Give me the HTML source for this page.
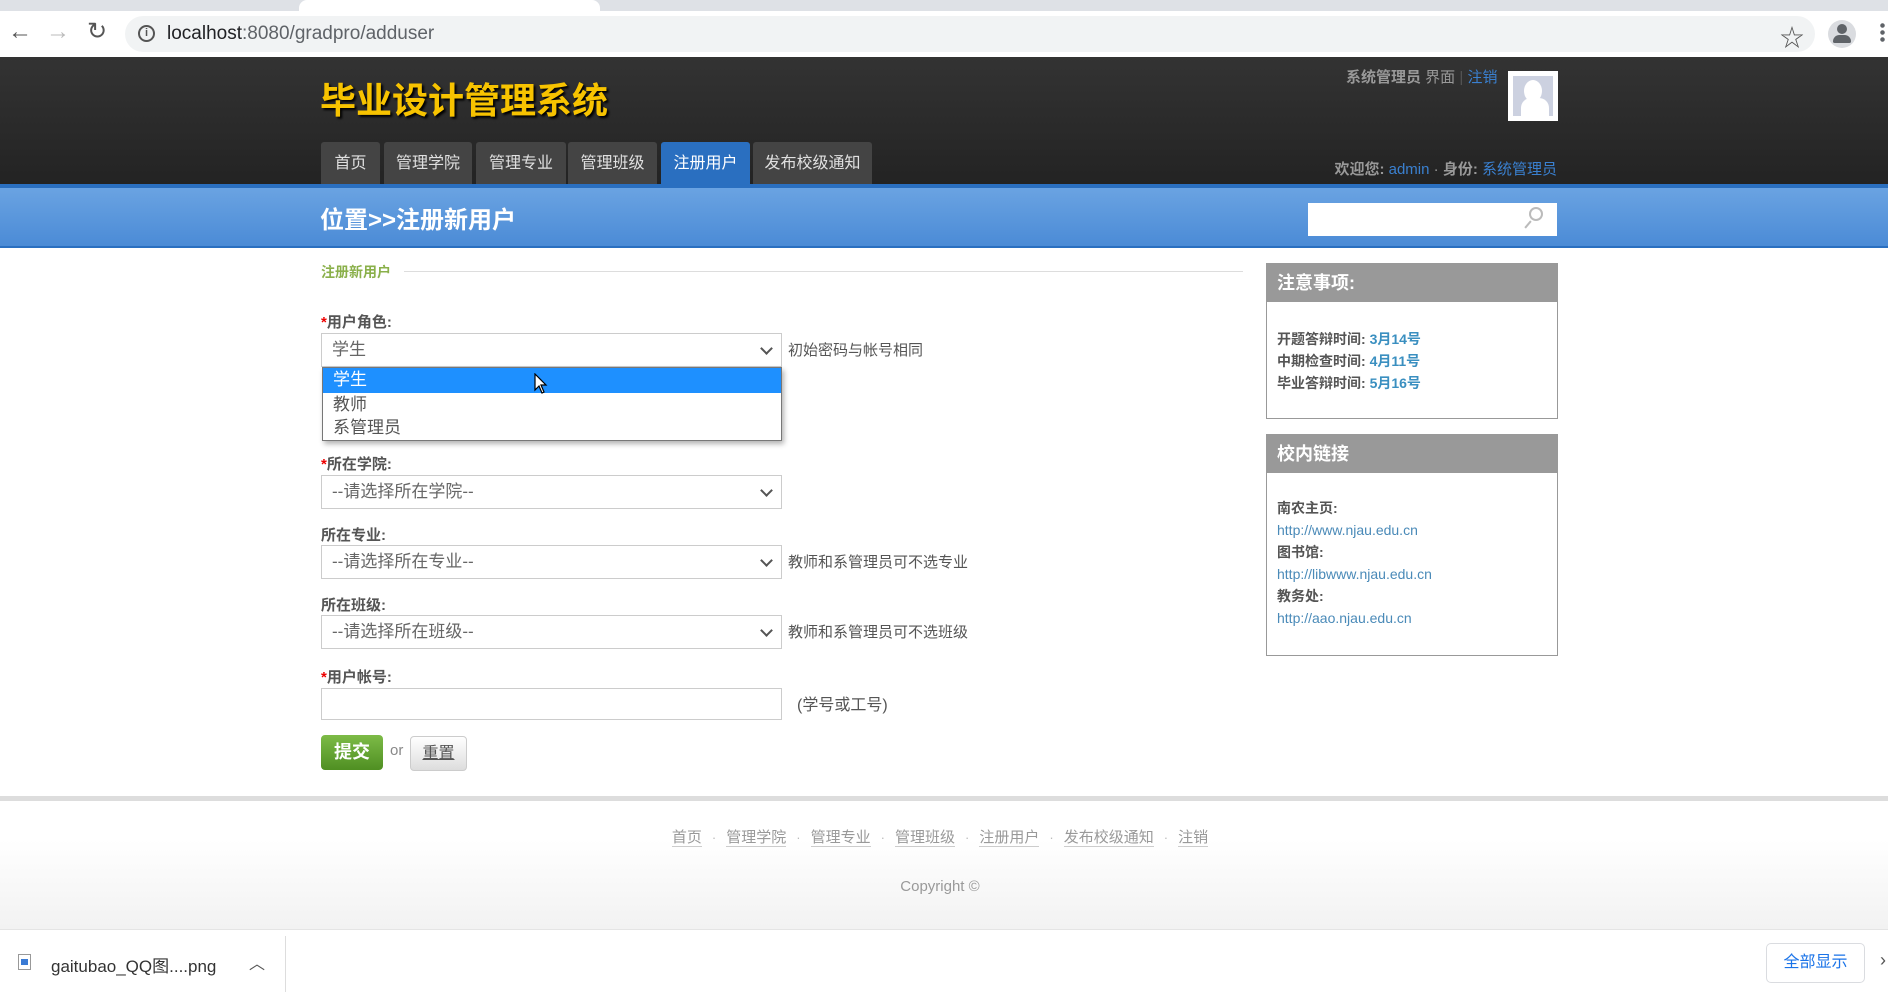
<!DOCTYPE html>
<html><head><meta charset="utf-8"><style>
*{margin:0;padding:0;box-sizing:border-box}
body{width:1888px;height:996px;overflow:hidden;position:relative;font-family:"Liberation Sans","Noto Sans CJK SC",sans-serif;background:#fff;color:#555}
.a{position:absolute;white-space:nowrap}
.tab{position:absolute;top:142px;height:42px;background:#444;color:#e0e0e0;font-size:16px;line-height:44px;text-align:center;border-radius:3px 3px 0 0}
.sel{position:absolute;left:321px;width:461px;height:34px;border:1px solid #ccc;background:#fff;font-size:17px;color:#666;line-height:32px;padding-left:10px}
.sel:after{content:"";position:absolute;right:10px;top:10px;width:7px;height:7px;border-right:2px solid #555;border-bottom:2px solid #555;transform:rotate(45deg)}
.lbl{position:absolute;left:321px;font-size:15px;font-weight:bold;color:#555}
.lbl b{color:#e00}
.hint{position:absolute;font-size:15px;color:#555}
.box{position:absolute;left:1266px;width:292px;border:1px solid #999}
.box h3{background:#999;color:#fff;font-size:18px;height:38px;line-height:38px;padding-left:10px}
.box p{font-size:14px;font-weight:bold;color:#555;padding-left:10px;line-height:22px}
.box p span{color:#3a8fc0}
.box a{display:block;font-size:14px;color:#4a8ab8;padding-left:10px;line-height:22px}
.fl{color:#999;text-decoration:none;border-bottom:1px solid #ccc;font-size:15px}
.dot{color:#bbb;margin:0 10px;font-size:13px}
</style></head><body>
<div class="a" style="left:0;top:0;width:1888px;height:11px;background:#dee1e6"></div>
<div class="a" style="left:299px;top:0;width:301px;height:11px;background:#fff;border-radius:8px 8px 0 0"></div>
<div class="a" style="left:0;top:11px;width:1888px;height:46px;background:#fff"></div>
<div class="a" style="left:8px;top:18px;font-size:24px;color:#555">←</div>
<div class="a" style="left:46px;top:18px;font-size:24px;color:#bbb">→</div>
<div class="a" style="left:87px;top:17px;font-size:24px;color:#555">↻</div>
<div class="a" style="left:125px;top:16px;width:1690px;height:36px;background:#f1f3f4;border-radius:18px"></div>
<div class="a" style="left:138px;top:25px;width:17px;height:17px;border:2px solid #555;border-radius:50%;font-size:11px;line-height:13px;text-align:center;color:#555;font-weight:bold">i</div>
<div class="a" style="left:167px;top:23px;font-size:19px;color:#202124">localhost<span style="color:#5f6368">:8080/gradpro/adduser</span></div>
<div class="a" style="left:1780px;top:18px;font-size:24px;color:#555">☆</div>
<div class="a" style="left:1828px;top:20px;width:28px;height:28px;border-radius:50%;background:#dadce0"></div>
<div class="a" style="left:1837px;top:24px;width:10px;height:10px;border-radius:50%;background:#5f6368"></div>
<div class="a" style="left:1833px;top:35px;width:18px;height:8px;border-radius:8px 8px 2px 2px;background:#5f6368"></div>
<div class="a" style="left:1880px;top:22px;width:5px;height:20px;background:radial-gradient(circle,#5f6368 2px,transparent 2.5px) 0 0/5px 7px"></div>
<div class="a" style="left:0;top:57px;width:1888px;height:127px;background:linear-gradient(#333,#232323)"></div>
<div class="a" style="left:320px;top:72px;font-size:36px;font-weight:bold;color:#f7c300;text-shadow:2px 2px 2px #000">毕业设计管理系统</div>
<div class="tab" style="left:321px;width:59px">首页</div>
<div class="tab" style="left:384px;width:88px">管理学院</div>
<div class="tab" style="left:476px;width:90px">管理专业</div>
<div class="tab" style="left:568px;width:89px">管理班级</div>
<div class="tab" style="left:661px;width:89px;background:#2a6fc0;color:#fff">注册用户</div>
<div class="tab" style="left:753px;width:119px">发布校级通知</div>
<div class="a" style="left:1346px;top:66px;font-size:15px;color:#999"><b>系统管理员</b> 界面 <span style="color:#555">|</span> <span style="color:#3a80d0">注销</span></div>
<div class="a" style="left:1508px;top:71px;width:50px;height:50px;background:#fff;padding:5px"><div style="width:40px;height:40px;background:#ccd1e0;position:relative;overflow:hidden"><div style="position:absolute;left:11px;top:4px;width:18px;height:22px;border-radius:50%;background:#fff"></div><div style="position:absolute;left:8px;top:22px;width:28px;height:24px;border-radius:10px 10px 0 0;background:#fff"></div></div></div>
<div class="a" style="right:331px;top:158px;font-size:15px;color:#999"><b>欢迎您:</b> <span style="color:#3a80d0">admin</span> · <b>身份:</b> <span style="color:#3a80d0">系统管理员</span></div>
<div class="a" style="left:0;top:184px;width:1888px;height:64px;background:linear-gradient(#6aa3e2,#4b8bd6);border-top:4px solid #2a6fc0;border-bottom:2px solid #2a6fc0"></div>
<div class="a" style="left:320px;top:200px;font-size:24px;font-weight:bold;color:#fff">位置&gt;&gt;注册新用户</div>
<div class="a" style="left:1308px;top:203px;width:249px;height:33px;background:#fff"></div>
<div class="a" style="left:1529px;top:207px;width:14px;height:14px;border:2px solid #bbb;border-radius:50%"></div>
<div class="a" style="left:1527px;top:220px;width:2px;height:9px;background:#bbb;transform:rotate(40deg)"></div>
<div class="a" style="left:321px;top:262px;font-size:14px;font-weight:bold;color:#8ab04a">注册新用户</div>
<div class="a" style="left:404px;top:271px;width:839px;height:1px;background:#ddd"></div>
<div class="lbl" style="top:311px"><b>*</b>用户角色:</div>
<div class="sel" style="top:333px">学生</div>
<div class="hint" style="left:788px;top:339px">初始密码与帐号相同</div>
<div class="lbl" style="top:453px"><b>*</b>所在学院:</div>
<div class="sel" style="top:475px">--请选择所在学院--</div>
<div class="lbl" style="top:524px">所在专业:</div>
<div class="sel" style="top:545px">--请选择所在专业--</div>
<div class="hint" style="left:788px;top:551px">教师和系管理员可不选专业</div>
<div class="lbl" style="top:594px">所在班级:</div>
<div class="sel" style="top:615px">--请选择所在班级--</div>
<div class="hint" style="left:788px;top:621px">教师和系管理员可不选班级</div>
<div class="lbl" style="top:666px"><b>*</b>用户帐号:</div>
<div class="a" style="left:321px;top:688px;width:461px;height:32px;border:1px solid #ccc"></div>
<div class="hint" style="left:797px;top:691px;font-size:16px">(学号或工号)</div>
<div class="a" style="left:321px;top:735px;width:62px;height:35px;border-radius:4px;background:linear-gradient(#7dbb47,#4f8f22);color:#fff;font-size:18px;font-weight:bold;line-height:35px;text-align:center">提交</div>
<div class="a" style="left:390px;top:742px;font-size:15px;color:#888">or</div>
<div class="a" style="left:410px;top:736px;width:57px;height:35px;border-radius:4px;border:1px solid #ccc;background:linear-gradient(#fff,#ddd);color:#555;font-size:16px;line-height:33px;text-align:center"><u>重置</u></div>
<div class="a" style="left:322px;top:367px;width:460px;height:74px;background:#fff;border:1px solid #777;box-shadow:2px 3px 5px rgba(0,0,0,.3);font-size:17px;color:#555">
<div style="background:#1e90ff;color:#fff;height:25px;line-height:24px;padding-left:10px">学生</div>
<div style="height:24px;line-height:24px;padding-left:10px">教师</div>
<div style="height:23px;line-height:22px;padding-left:10px">系管理员</div>
</div>
<svg class="a" style="left:534px;top:373px" width="14" height="22" viewBox="0 0 14 22"><path d="M1 1 L1 17 L5 13 L8 20 L10 19 L7 12 L12 12 Z" fill="#fff" stroke="#000" stroke-width="1.2"/></svg>
<div class="box" style="top:263px;height:156px"><h3>注意事项:</h3><div style="height:26px"></div>
<p>开题答辩时间: <span>3月14号</span></p><p>中期检查时间: <span>4月11号</span></p><p>毕业答辩时间: <span>5月16号</span></p></div>
<div class="box" style="top:434px;height:222px"><h3>校内链接</h3><div style="height:24px"></div>
<p>南农主页:</p><a>http://www.njau.edu.cn</a><p>图书馆:</p><a>http://libwww.njau.edu.cn</a><p>教务处:</p><a>http://aao.njau.edu.cn</a></div>
<div class="a" style="left:0;top:796px;width:1888px;height:133px;background:linear-gradient(#fff 30%,#f2f2f2);border-top:5px solid #ddd"></div>
<div class="a" style="left:0;width:1880px;top:826px;text-align:center"><span class="fl">首页</span><span class="dot">·</span><span class="fl">管理学院</span><span class="dot">·</span><span class="fl">管理专业</span><span class="dot">·</span><span class="fl">管理班级</span><span class="dot">·</span><span class="fl">注册用户</span><span class="dot">·</span><span class="fl">发布校级通知</span><span class="dot">·</span><span class="fl">注销</span></div>
<div class="a" style="left:0;width:1880px;top:878px;text-align:center;font-size:15px;color:#999">Copyright ©</div>
<div class="a" style="left:0;top:929px;width:1888px;height:67px;background:#fff;border-top:1px solid #e4e4e4"></div>
<div class="a" style="left:18px;top:954px;width:13px;height:16px;border:1px solid #999;background:#fff"><div style="margin:4px 2px;height:6px;background:#3a7bd5"></div></div>
<div class="a" style="left:51px;top:952px;font-size:17px;color:#333">gaitubao_QQ图....png</div>
<div class="a" style="left:249px;top:950px;font-size:16px;color:#555">︿</div>
<div class="a" style="left:285px;top:936px;width:1px;height:56px;background:#ddd"></div>
<div class="a" style="left:1766px;top:943px;width:99px;height:40px;border:1px solid #dadce0;border-radius:5px;color:#1a73e8;font-size:16px;line-height:38px;text-align:center">全部显示</div>
<div class="a" style="left:1880px;top:950px;font-size:18px;color:#555">›</div>
</body></html>
